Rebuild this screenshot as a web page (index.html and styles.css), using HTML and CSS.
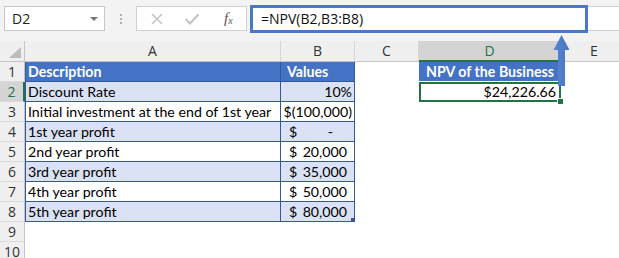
FILE: index.html
```html
<!DOCTYPE html>
<html lang="en">
<head>
    <meta charset="UTF-8">
    <title>NPV of the Business</title>
    <link rel="stylesheet" href="styles.css">
</head>
<body>
    <div class="app">
        <div class="toolbar">
            <div class="namebox">
                <span>D2</span>
                <span class="caret"></span>
            </div>
            <div class="grip"><i></i><i></i><i></i></div>
            <div class="fxbtns">
                <svg width="14" height="14" viewBox="0 0 14 14"><path d="M2 2 L12 12 M12 2 L2 12" stroke="#c3c3c3" stroke-width="1.6" fill="none"/></svg>
                <svg width="16" height="14" viewBox="0 0 16 14"><path d="M1.5 7 L6 11.5 L14.5 2.5" stroke="#c3c3c3" stroke-width="2" fill="none"/></svg>
                <span class="fx">f<sub>x</sub></span>
            </div>
            <div class="formula">
                <div class="formula-hl">=NPV(B2,B3:B8)</div>
            </div>
        </div>

        <div class="sheet">
            <div class="corner"></div>
            <div class="ch">A</div>
            <div class="ch">B</div>
            <div class="ch">C</div>
            <div class="ch sel">D</div>
            <div class="ch e">E</div>

            <div class="rh">1</div>
            <div class="c a hd">Description</div>
            <div class="c b hd">Values</div>
            <div class="c"></div>
            <div class="c hd npv-title">NPV of the Business</div>
            <div class="c"></div>

            <div class="rh sel">2</div>
            <div class="c a band">Discount Rate</div>
            <div class="c b band right">10%</div>
            <div class="c"></div>
            <div class="c npv">$24,226.66<span class="handle"></span></div>
            <div class="c"></div>

            <div class="rh">3</div>
            <div class="c a">Initial investment at the end of 1st year</div>
            <div class="c b right">$(100,000)</div>
            <div class="c"></div>
            <div class="c"></div>
            <div class="c"></div>

            <div class="rh">4</div>
            <div class="c a band">1st year profit</div>
            <div class="c b band acc"><span>$</span><span class="dash">-</span></div>
            <div class="c"></div>
            <div class="c"></div>
            <div class="c"></div>

            <div class="rh">5</div>
            <div class="c a">2nd year profit</div>
            <div class="c b acc"><span>$</span><span>20,000</span></div>
            <div class="c"></div>
            <div class="c"></div>
            <div class="c"></div>

            <div class="rh">6</div>
            <div class="c a band">3rd year profit</div>
            <div class="c b band acc"><span>$</span><span>35,000</span></div>
            <div class="c"></div>
            <div class="c"></div>
            <div class="c"></div>

            <div class="rh">7</div>
            <div class="c a">4th year profit</div>
            <div class="c b acc"><span>$</span><span>50,000</span></div>
            <div class="c"></div>
            <div class="c"></div>
            <div class="c"></div>

            <div class="rh">8</div>
            <div class="c a band">5th year profit</div>
            <div class="c b band acc"><span>$</span><span>80,000</span><span class="resize"></span></div>
            <div class="c"></div>
            <div class="c"></div>
            <div class="c"></div>

            <div class="rh">9</div>
            <div class="c"></div>
            <div class="c"></div>
            <div class="c"></div>
            <div class="c"></div>
            <div class="c"></div>

            <div class="rh">10</div>
            <div class="c"></div>
            <div class="c"></div>
            <div class="c"></div>
            <div class="c"></div>
            <div class="c"></div>
        </div>

        <!-- callout arrow from D2 up to the formula bar -->
        <svg class="arrow" width="18" height="53" viewBox="0 0 18 53">
            <defs>
                <linearGradient id="ag" x1="0" x2="1" y1="0" y2="0">
                    <stop offset="0" stop-color="#5685d2"/>
                    <stop offset="1" stop-color="#4775c2"/>
                </linearGradient>
            </defs>
            <path d="M8.5 1 L16.5 16 L12 16 L12 52 L5 52 L5 16 L0.5 16 Z" fill="url(#ag)"/>
        </svg>
    </div>
</body>
</html>
```

FILE: styles.css
```css
html, body {
    margin: 0;
    padding: 0;
    background: #fff;
}
.app {
    position: relative;
    width: 619px;
    height: 258px;
    overflow: hidden;
    font-family: "Open Sans", "Noto Sans", sans-serif;
}
.toolbar {
    height: 41px;
    background: #f3f3f3;
    display: flex;
    align-items: flex-start;
    box-sizing: border-box;
    padding-top: 6px;
}
.namebox {
    margin-left: 4px;
    width: 101px;
    height: 25px;
    box-sizing: border-box;
    border: 1px solid #c6c6c6;
    background: #fff;
    display: flex;
    align-items: center;
    justify-content: space-between;
    padding: 0 6px 0 7px;
    font-size: 14px;
    color: #222;
}
.caret {
    width: 0;
    height: 0;
    border-left: 4px solid transparent;
    border-right: 4px solid transparent;
    border-top: 4px solid #777;
}
.grip {
    width: 31px;
    height: 25px;
    display: flex;
    flex-direction: column;
    align-items: center;
    justify-content: center;
    gap: 2px;
}
.grip i {
    width: 2px;
    height: 2px;
    background: #b0b0b0;
}
.fxbtns {
    width: 111px;
    height: 25px;
    box-sizing: border-box;
    border: 1px solid #d0d0d0;
    background: #fff;
    display: flex;
    align-items: center;
    padding-left: 13px;
    gap: 20px;
}
.fx {
    font-family: "Liberation Serif", serif;
    font-style: italic;
    font-size: 15px;
    color: #555;
    margin-left: 4px;
}
.fx sub {
    font-size: 10px;
    vertical-align: -1px;
}
.formula {
    margin-left: 3px;
    flex: 1;
    height: 25px;
    background: #fff;
    border-top: 1px solid #d0d0d0;
    border-bottom: 1px solid #d0d0d0;
    box-sizing: border-box;
    position: relative;
}
.formula-hl {
    position: absolute;
    left: 0;
    top: -2px;
    width: 338px;
    height: 28px;
    box-sizing: border-box;
    border: 3px solid #4a78c6;
    font-size: 14px;
    color: #111;
    padding-left: 8px;
    line-height: 22px;
}

.sheet {
    display: grid;
    grid-template-columns: 25px 256px 74px 64px 142px 1fr;
    grid-template-rows: 21px repeat(10, 20px);
}
.corner {
    background: #efefef;
    border-right: 1px solid #c4c4c4;
    border-bottom: 1px solid #c4c4c4;
    position: relative;
}
.corner::after {
    content: "";
    position: absolute;
    right: 3px;
    bottom: 3px;
    width: 0;
    height: 0;
    border-left: 12px solid transparent;
    border-bottom: 11px solid #bcbcbc;
}
.ch {
    background: #efefef;
    border-right: 1px solid #d6d6d6;
    border-bottom: 1px solid #c4c4c4;
    text-align: center;
    font-size: 14px;
    line-height: 20px;
    color: #333;
}
.ch.sel {
    background: #d4d4d4;
    color: #217346;
    border-bottom: 2px solid #217346;
    line-height: 19px;
}
.ch.e {
    padding-left: 8px;
    border-right: none;
}
.rh {
    background: #efefef;
    border-right: 1px solid #c4c4c4;
    border-bottom: 1px solid #dadada;
    box-sizing: border-box;
    text-align: center;
    font-size: 14px;
    line-height: 19px;
    color: #333;
    overflow: hidden;
}
.rh.sel {
    background: #d4d4d4;
    color: #217346;
    border-right: 2px solid #217346;
}

.c {
    box-sizing: border-box;
    font-family: Lato, "Open Sans", sans-serif;
    font-size: 14.2px;
    line-height: 19px;
    color: #000;
    white-space: nowrap;
    position: relative;
}
.c.a {
    border-left: 1px solid #35589a;
    border-right: 1px solid #35589a;
    border-bottom: 1px solid #35589a;
    padding-left: 2px;
}
.c.b {
    border-right: 1px solid #35589a;
    border-bottom: 1px solid #35589a;
}
.hd {
    background: #4472c4;
    color: #fff;
    font-weight: bold;
}
.c.b.hd {
    padding-left: 6px;
}
.band {
    background: #d9e1f2;
}
.right {
    text-align: right;
    padding-right: 2px;
}
.acc {
    display: flex;
    justify-content: space-between;
    padding: 0 7px 0 8px;
}
.acc .dash {
    padding-right: 14px;
}
.resize {
    position: absolute;
    right: 0;
    bottom: 0;
    width: 3px;
    height: 3px;
    background: #35589a;
}
.npv-title {
    text-align: center;
    border-bottom: 1px solid #fff;
}
.npv {
    text-align: right;
    padding-right: 5px;
    box-shadow: inset 0 0 0 2px #217346;
    line-height: 20px;
}
.handle {
    position: absolute;
    right: -3px;
    bottom: -3px;
    width: 5px;
    height: 5px;
    background: #217346;
    border: 1px solid #fff;
}
.arrow {
    position: absolute;
    left: 553px;
    top: 34px;
}
```
